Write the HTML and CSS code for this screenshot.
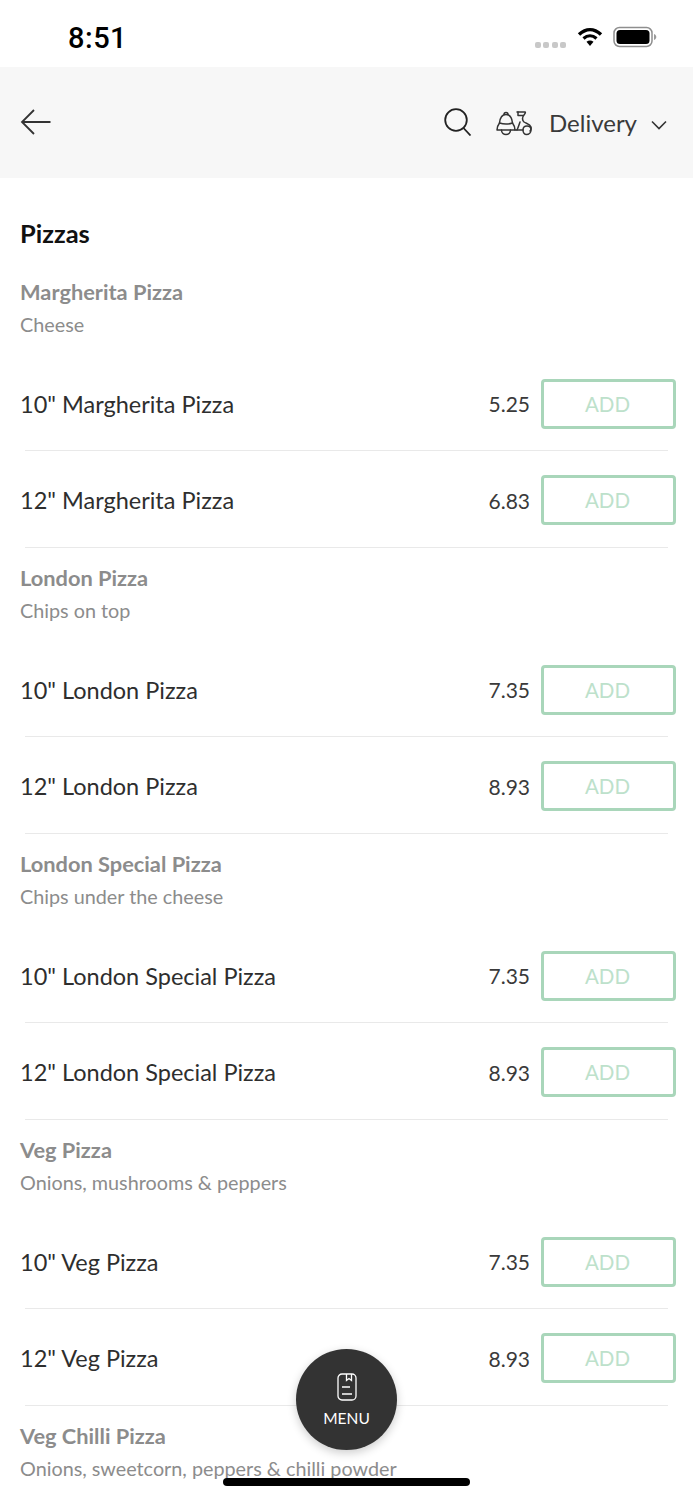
FILE: index.html
```html
<!DOCTYPE html>
<html lang="en">
<head>
  <meta charset="UTF-8" />
  <meta name="viewport" content="width=device-width, initial-scale=1.0"/>
  <title>Pizzas</title>
  <link rel="stylesheet" href="styles.css">
</head>
<body>
  <div class="status-bar">
    <span class="clock">8:51</span>
    <div class="status-icons">
      <div class="signal"><i></i><i></i><i></i><i></i></div>
      <svg class="wifi" width="26" height="20" viewBox="0 0 26 20">
        <path d="M2 7.500C9 1 17 1 24 7.500" fill="none" stroke="#000" stroke-width="3.400"/>
        <path d="M6.500 11.500C10.500 8 15.500 8 19.500 11.500" fill="none" stroke="#000" stroke-width="3.200"/>
        <path d="M9.500 14.800C11.800 13 14.200 13 16.500 14.800L13 19Z" fill="#000"/>
      </svg>
      <svg class="battery" width="44" height="22" viewBox="0 0 44 22">
        <rect x="1" y="1.500" width="38" height="19" rx="5.500" fill="none" stroke="#8e8e8e" stroke-width="1.500"/>
        <rect x="3.500" y="4" width="33" height="14" rx="3.500" fill="#000"/>
        <path d="M41 8v6c1.500-.5 2.300-1.700 2.300-3s-.8-2.500-2.300-3z" fill="#9a9a9a"/>
      </svg>
    </div>
  </div>

  <header class="top-bar">
    <svg class="back" width="32" height="28" viewBox="0 0 32 28">
      <path d="M30.500 14H2M14 2L2 14l12 12" fill="none" stroke="#333" stroke-width="1.800"/>
    </svg>
    <div class="top-actions">
      <svg class="search" width="28" height="28" viewBox="0 0 28 28">
        <circle cx="12" cy="12" r="10.800" fill="none" stroke="#222" stroke-width="1.800"/>
        <path d="M19.500 20l7 7.500" fill="none" stroke="#222" stroke-width="1.800"/>
      </svg>
      <svg class="scooter" width="36" height="28" viewBox="0 0 36 28">
        <g fill="none" stroke="#333" stroke-width="1.500" stroke-linejoin="round" stroke-linecap="round">
          <path d="M8 5.500C8 2.800 12 2.800 12 5.500"/>
          <path d="M3.500 14C4 9 6.500 5.500 10 5.500C13.500 5.500 16 9 16.500 14"/>
          <path d="M3.500 14C2 16 1 18.500 1 21H19C19 18.500 18 16 16.500 14C12 15.500 8 15.500 3.500 14Z"/>
          <path d="M5.500 21C5.500 27 14.500 27 14.500 21"/>
          <path d="M19 21H27"/>
          <path d="M21 3H29C29.500 3 29.500 4 29 4.500C26 8 26 11 28 13C30 14.500 34 15 35 18C35.500 20 35 21 34 22"/>
          <path d="M22 3V6.500H27"/>
          <path d="M27 21C27 18 28.500 17 31 17C33.500 17 35 18.500 35 21C35 23.500 33 25.500 30.500 25.500C28.500 25.500 27 23.500 27 21Z"/>
          <path d="M24 13C23 16 22 19 21 21"/>
        </g>
      </svg>
      <span class="delivery">Delivery</span>
      <svg class="chevron" width="16" height="10" viewBox="0 0 16 10">
        <path d="M1 1.500l7 7 7-7" fill="none" stroke="#333" stroke-width="1.600"/>
      </svg>
    </div>
  </header>

  <main class="menu-list">
    <h1 class="section-title">Pizzas</h1>

    <section class="group first">
      <h2>Margherita Pizza</h2>
      <p>Cheese</p>
    </section>
    <div class="item"><span class="item-name">10" Margherita Pizza</span><span class="price">5.25</span><button class="add">ADD</button></div>
    <div class="item"><span class="item-name">12" Margherita Pizza</span><span class="price">6.83</span><button class="add">ADD</button></div>

    <section class="group">
      <h2>London Pizza</h2>
      <p>Chips on top</p>
    </section>
    <div class="item"><span class="item-name">10" London Pizza</span><span class="price">7.35</span><button class="add">ADD</button></div>
    <div class="item"><span class="item-name">12" London Pizza</span><span class="price">8.93</span><button class="add">ADD</button></div>

    <section class="group">
      <h2>London Special Pizza</h2>
      <p>Chips under the cheese</p>
    </section>
    <div class="item"><span class="item-name">10" London Special Pizza</span><span class="price">7.35</span><button class="add">ADD</button></div>
    <div class="item"><span class="item-name">12" London Special Pizza</span><span class="price">8.93</span><button class="add">ADD</button></div>

    <section class="group">
      <h2>Veg Pizza</h2>
      <p>Onions, mushrooms &amp; peppers</p>
    </section>
    <div class="item"><span class="item-name">10" Veg Pizza</span><span class="price">7.35</span><button class="add">ADD</button></div>
    <div class="item"><span class="item-name">12" Veg Pizza</span><span class="price">8.93</span><button class="add">ADD</button></div>

    <section class="group">
      <h2>Veg Chilli Pizza</h2>
      <p>Onions, sweetcorn, peppers &amp; chilli powder</p>
    </section>
  </main>

  <button class="menu-fab">
    <svg width="20" height="28" viewBox="0 0 20 28">
      <rect x="1" y="1" width="18" height="26" rx="4" fill="none" stroke="#fff" stroke-width="1.300"/>
      <path d="M9.500 1v6.500l2.500-2 2.500 2V1M5 14h8M5 21h10" fill="none" stroke="#fff" stroke-width="1.300"/>
    </svg>
    <span>MENU</span>
  </button>
  <div class="home-bar"></div>
</body>
</html>
```

FILE: styles.css
```css
html, body {
  height: 1500px;
}
body {
  font-family: Lato, sans-serif;
  margin: 0;
  padding: 0;
  background: white;
  overflow: hidden;
  position: relative;
}
.status-bar {
  height: 67px;
  display: flex;
  justify-content: space-between;
  align-items: center;
  padding: 8px 36px 0 68px;
  box-sizing: border-box;
}
.clock {
  font-family: Roboto, sans-serif;
  font-size: 29px;
  font-weight: 500;
  color: #000;
  letter-spacing: 0.5px;
}
.status-icons {
  display: flex;
  align-items: center;
  margin-top: -1px;
}
.signal {
  display: flex;
  gap: 2.500px;
  margin: 15px 11px 0 0;
}
.signal i {
  width: 6px;
  height: 6px;
  border-radius: 2px;
  background: #c8c8c8;
}
.wifi {
  margin-right: 10px;
}
.top-bar {
  height: 111px;
  background: #f7f7f7;
  display: flex;
  justify-content: space-between;
  align-items: center;
  padding: 0 26px 0 20px;
}
.back {
  margin-top: -1px;
}
.top-actions {
  display: flex;
  align-items: center;
  margin-top: 1px;
}
.search {
  margin-top: -3px;
  margin-right: 24px;
}
.scooter {
  margin-right: 17px;
}
.delivery {
  font-size: 24px;
  color: #3a3a3a;
  margin: -2px 14px 0 0;
}
.chevron {
  margin-top: 3px;
}
.menu-list {
  padding-top: 37px;
}
.section-title {
  margin: 0;
  padding-left: 20px;
  font-size: 25.500px;
  line-height: 36px;
  font-weight: 700;
  color: #111;
}
.group {
  height: 93px;
  padding: 14.500px 20px 0;
  box-sizing: border-box;
}
.group.first {
  height: 104.500px;
  padding-top: 26px;
}
.group h2 {
  margin: 0;
  font-size: 21.800px;
  line-height: 30px;
  font-weight: 700;
  color: #8c8c8c;
}
.group p {
  margin: 3px 0 0;
  font-size: 19.800px;
  line-height: 28px;
  color: #8c8c8c;
}
.item {
  height: 96.500px;
  display: flex;
  align-items: center;
  padding: 0 17px 0 20px;
  box-sizing: border-box;
  position: relative;
}
.item::after {
  content: "";
  position: absolute;
  left: 25px;
  right: 25px;
  bottom: 1px;
  height: 1px;
  background: #e9e9e9;
}
.item-name {
  flex: 1;
  font-size: 23.500px;
  color: #2e2e2e;
}
.price {
  font-size: 21px;
  color: #3a3a3a;
  margin-right: 11px;
}
.add {
  width: 135px;
  height: 50px;
  background: white;
  border: 3px solid #a9d6ba;
  border-radius: 4px;
  font-family: Lato, sans-serif;
  font-size: 20.500px;
  color: #bde1cb;
  padding: 0 2px 0 0;
}
.menu-fab {
  position: absolute;
  left: 296px;
  top: 1349px;
  width: 101px;
  height: 101px;
  border: none;
  border-radius: 50%;
  background: #333;
  box-shadow: 0 3px 10px rgba(0,0,0,0.2);
  color: white;
  display: flex;
  flex-direction: column;
  align-items: center;
  padding: 24px 0 0;
  box-sizing: border-box;
  font-family: Lato, sans-serif;
}
.menu-fab span {
  font-size: 15.500px;
  margin-top: 8px;
}
.home-bar {
  position: absolute;
  left: 223px;
  top: 1478px;
  width: 247px;
  height: 8px;
  border-radius: 4px;
  background: #000;
}
```
